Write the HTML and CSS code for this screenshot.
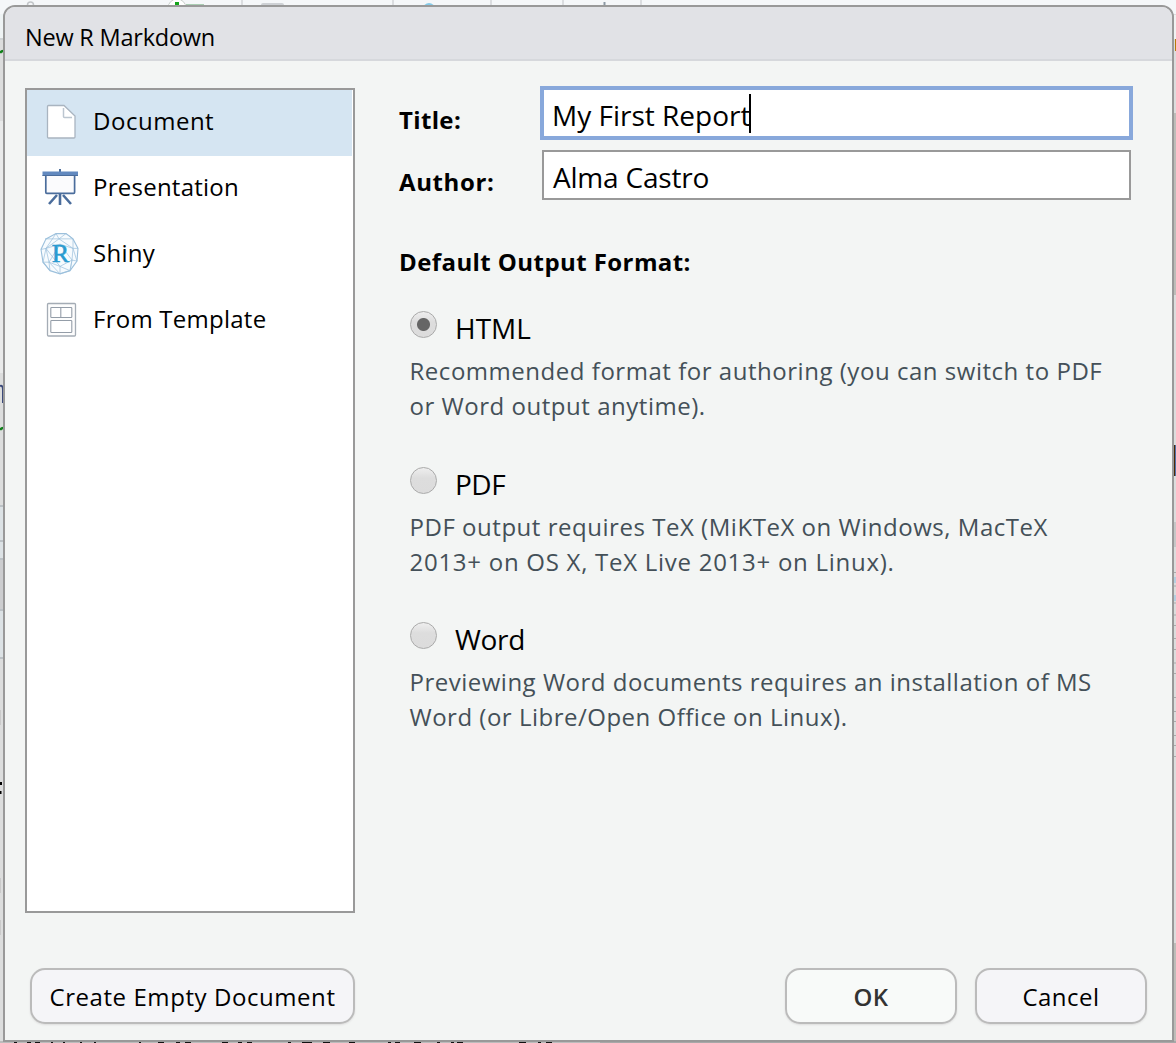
FILE: index.html
```html
<!DOCTYPE html>
<html lang="en">
<head>
<meta charset="utf-8">
<title>New R Markdown</title>
<link rel="stylesheet" href="styles.css">
</head>
<body>
<svg class="workspace" width="1176" height="1043" viewBox="0 0 1176 1043" aria-hidden="true">
  <rect width="1176" height="1043" fill="#dcdddd"/>
  <rect width="1176" height="14" fill="#f5f7f9"/>
  <rect y="14" width="6" height="24" fill="#eef3f4"/>
  <rect y="38" width="6" height="2" fill="#cfd3d5"/>
  <path d="M0 53q1-2 4-2" stroke="#10801a" stroke-width="2.500" fill="none"/>
  <rect y="121" width="4" height="252" fill="#e9eaea"/>
  <circle cx="30.500" cy="5" r="3" fill="none" stroke="#c2c5c8" stroke-width="1.500"/>
  <circle cx="177" cy="8" r="9" fill="#fff" stroke="#c9cfcb"/>
  <rect x="175" y="2" width="4" height="5" fill="#14a51b"/>
  <rect x="186" y="4" width="18" height="3" fill="#aacdb3"/>
  <rect x="261" y="3" width="23" height="4" rx="2" fill="#ced1d5"/>
  <path d="M242 0v6M393 0v6M491 0v6M563 0v6M641 0v6" stroke="#d2d5d8" stroke-width="1.500"/>
  <circle cx="429" cy="9" r="6" fill="#86cbe9"/>
  <path d="M604.500 2v4" stroke="#8c98a3" stroke-width="2"/>
  <path d="M0 386q3-1 3 4v13" stroke="#3c4a7a" stroke-width="2" fill="none"/>
  <path d="M0 430q1-2 4-2" stroke="#10801a" stroke-width="2.500" fill="none"/>
  <rect y="505" width="4" height="153" fill="#dce2e5"/>
  <rect y="559" width="4" height="50" fill="#cccdcf"/>
  <path d="M0 506h4M0 541h4M0 559h4M0 610h4M0 658h4" stroke="#bcc2c6" stroke-width="1.800"/>
  <rect y="710" width="1" height="15" fill="#cacaca"/>
  <rect y="782" width="2" height="3"/><rect y="791" width="1.500" height="3"/>
  <rect y="878" width="1" height="15" fill="#cacaca"/><rect y="920" width="1" height="15" fill="#cacaca"/>
  <rect x="1173" y="15" width="3" height="24" fill="#f1f2f2"/>
  <rect x="1175" y="39" width="1" height="12" fill="#b8790a"/>
  <rect x="1173" y="113" width="3" height="182" fill="#bdbdb9"/>
  <rect x="1174" y="445" width="1" height="31" fill="#4c2a07"/>
  <rect x="1175" y="445" width="1" height="31" fill="#5272a8"/>
  <rect x="1174" y="522" width="2" height="25" fill="#c6c7c7"/>
  <rect x="1174" y="577" width="2" height="6" fill="#b5cfe0"/><rect x="1174" y="595" width="2" height="6" fill="#b5cfe0"/>
  <path d="M1174 572.500h2M1174 586h2M1174 603h2M1174 615h2M1174 625.500h2M1174 638.500h2M1174 649.500h2M1174 663h2M1174 673.500h2M1174 697.500h2M1174 711.500h2M1174 721.500h2M1174 735.500h2M1174 745.500h2M1174 756.500h2" stroke="#aaa"/>
  <rect x="1174" y="943" width="2" height="100" fill="#bdbdb9"/>
  <rect x="0" y="1041" width="600" height="2" fill="#bcbcbc"/>
  <rect x="600" y="1041" width="576" height="2" fill="#a8a8a8"/>
  <path d="M14 1042.500h3M27 1042.500h4M35 1042.500h5M51 1042.500h2M63 1042.500h2M80 1042.500h2M94 1042.500h2M139 1042.500h2M158 1042.500h6M176 1042.500h4M185 1042.500h6M222 1042.500h6M238 1042.500h4M247 1042.500h5M288 1042.500h3M302 1042.500h10M323 1042.500h7M349 1042.500h6M388 1042.500h3M395 1042.500h5M414 1042.500h7M437 1042.500h3M451 1042.500h3M457 1042.500h6M519 1042.500h7M538 1042.500h3M546 1042.500h6" stroke="#111" stroke-width="1.200"/>
</svg>

<main class="dialog">
  <header class="caption"><span class="caption-text">New R Markdown</span></header>
  <div class="content">
    <nav class="kinds">
      <div class="kind selected">
        <svg class="kind-icon" viewBox="0 1 40 40"><path d="M8.500 3.500h15.500l11 10.500v21q0 1-1 1h-25.500q-1 0-1-1v-30.500q0-1 1-1z" fill="#fff" stroke="#a9b4c0" stroke-width="1.300"/><path d="M23.500 6v8.500q0 1 1 1h7.500" fill="none" stroke="#bcc6d0" stroke-width="1.500"/></svg>
        <span class="t-doc">Document</span>
      </div>
      <div class="kind">
        <svg class="kind-icon" viewBox="0 0 40 40"><path d="M20 25v11M17 26l-8 9M23 26l8 9" fill="none" stroke="#4b6d9c" stroke-width="2.600"/><path d="M20 0v4" stroke="#4b6d9c" stroke-width="2"/><rect x="5.800" y="6" width="28.800" height="18.300" rx="1" fill="#fbfbfd" stroke="#4b6d9c" stroke-width="1.700"/><rect x="2.500" y="2.500" width="35.500" height="4.500" fill="#6289bf"/><path d="M2.500 6.500h35.500" stroke="#4b6d9c"/></svg>
        <span class="t-pres">Presentation</span>
      </div>
      <div class="kind">
        <svg class="kind-icon" viewBox="0 0 40 40"><g transform="translate(0 -2.500) scale(1 1.060)" fill="none" stroke="#9cc0dc" stroke-width=".7"><path d="M16 1l10 0 7 5 5 9-1 12-7 9-10 3-10-3-7-8-2-12 5-10z" fill="#f7fbfe" stroke-width="1.100"/><path d="M16 1l3 5-13 9-3 13 7 8-1-8 11 11 10-3-10-4-11-4-3-13 10-14M6 15l14-4 13 4-14-9 14 0-7-5-7 5M33 6l0 9 4 12-5-1-2 10 2-10-12 6 0 7M38 15l-5 0-1 11M6 15l14 17M1 16l5-1M20 11l12 15M20 11l-11 17-6 0M5 6l14 0"/></g><text x="20.500" y="26.700" text-anchor="middle" class="shiny-r">R</text></svg>
        <span class="t-shiny">Shiny</span>
      </div>
      <div class="kind">
        <svg class="kind-icon" viewBox="0 1 40 40"><rect x="7.500" y="3.500" width="28" height="32.500" rx="1" fill="#fdfdfd" stroke="#a4acb5" stroke-width="1.300"/><g fill="#fff" stroke="#949da8" stroke-width="1.100"><rect x="10.800" y="7.500" width="21" height="10" rx=".8"/><path d="M20.800 7.500v10"/><rect x="10.800" y="20.500" width="21" height="12" rx=".8"/></g></svg>
        <span class="t-temp">From Template</span>
      </div>
    </nav>
    <section class="options">
      <div class="field">
        <label class="label t-title">Title:</label>
        <div class="input focused"><span class="value t-report">My First Report</span><i class="caret"></i></div>
      </div>
      <div class="field">
        <label class="label t-author">Author:</label>
        <div class="input"><span class="value t-alma">Alma Castro</span></div>
      </div>
      <h2 class="label heading">Default Output Format:</h2>
      <div class="format">
        <div class="choice"><i class="radio checked"></i><span class="t-html">HTML</span></div>
        <p class="note"><span class="t-n1">Recommended format for authoring (you can switch to PDF</span><br><span class="t-n2">or Word output anytime).</span></p>
      </div>
      <div class="format">
        <div class="choice"><i class="radio"></i><span class="t-pdf">PDF</span></div>
        <p class="note"><span class="t-n3">PDF output requires TeX (MiKTeX on Windows, MacTeX</span><br><span class="t-n4">2013+ on OS X, TeX Live 2013+ on Linux).</span></p>
      </div>
      <div class="format">
        <div class="choice"><i class="radio"></i><span class="t-word">Word</span></div>
        <p class="note"><span class="t-n5">Previewing Word documents requires an installation of MS</span><br><span class="t-n6">Word (or Libre/Open Office on Linux).</span></p>
      </div>
    </section>
  </div>
  <footer class="buttons">
    <button class="button create"><span class="t-create">Create Empty Document</span></button>
    <button class="button ok"><span class="t-ok">OK</span></button>
    <button class="button"><span class="t-cancel">Cancel</span></button>
  </footer>
</main>
</body>
</html>
```
FILE: styles.css
```css
* { box-sizing: border-box; }
body {
  margin: 0;
  height: 1043px;
  overflow: hidden;
  padding: 5px 2px 1px 3px;
  font-family: "Open Sans", "Noto Sans", sans-serif;
  font-size: 24px;
  color: #000;
}
.workspace { position: absolute; left: 0; top: 0; z-index: -1; }
.dialog {
  display: flex;
  flex-direction: column;
  width: 1171px;
  height: 1037px;
  background: #f3f5f4;
  border: 2px solid #999;
  border-radius: 12px 12px 0 0;
  overflow: hidden;
}
.caption {
  flex: none;
  height: 54px;
  padding: 10px 0 0 20px;
  line-height: 40px;
  font-size: 23.5px;
  letter-spacing: -.22px;
  background: #e1e2e6;
  border-bottom: 2px solid #d6d8dc;
}
.content { display: flex; padding: 25px 39px 0 20px; height: 907px; }
.kinds {
  width: 330px;
  height: 825px;
  margin-top: 2px;
  background: #fff;
  border: 2px solid #999;
  padding-right: 1px;
}
.kind {
  display: flex;
  align-items: center;
  height: 66px;
  padding-left: 13px;
  gap: 13px;
  line-height: 62px;
}
.kind span { padding-bottom: 4px; }
.selected { background: #d5e5f2; }
.kind-icon { width: 40px; height: 40px; flex: none; overflow: visible; }
.shiny-r { font: 400 26px "Liberation Serif", serif; fill: #2a9bd0; stroke: #2a9bd0; stroke-width: .6px; }
.options { flex: 1; margin-left: 44px; }
.field { display: flex; height: 54px; margin-bottom: 8px; }
.label { font-weight: 700; font-size: 24px; margin: 0; }
.field .label { width: 143px; line-height: 68px; }
.input {
  display: flex;
  align-items: center;
  width: 589px;
  height: 50px;
  margin-top: 2px;
  padding-left: 9px;
  border: 2px solid #999;
  background: #fff;
  font-size: 28px;
}
.focused {
  width: 593px;
  height: 54px;
  margin: 0 -2px;
  padding-left: 8px;
  border: 4px solid #88a8db;
}
.value { line-height: 42px; padding-top: 4px; }
.caret { width: 2px; height: 39px; background: #000; margin-left: -1px; }
.heading { line-height: 34px; margin-top: 43px; height: 34px; letter-spacing: .42px; }
.format { padding-left: 11px; height: 155.500px; }
.heading + .format { margin-top: 29px; }
.choice { display: flex; height: 45px; font-size: 28px; line-height: 40px; gap: 18px; }
.radio {
  width: 27px;
  height: 27px;
  margin-top: 3px;
  border: 1px solid #aaa;
  border-radius: 50%;
  background: linear-gradient(#eee, #ddd 40%, #dcdcdc);
}
.checked { background: radial-gradient(circle, #666 0 6px, transparent 7px), linear-gradient(#eee, #ddd 40%, #dcdcdc); }
.note { margin: 0 0 0 -.5px; color: #445058; line-height: 35px; white-space: nowrap; }
.buttons { display: flex; padding: 0 25px; height: 56px; }
.button {
  width: 172px;
  height: 56px;
  margin-left: 18px;
  padding: 2px 0 0;
  border: 2px solid #bbb;
  border-radius: 15px;
  background: #f5f5f8;
  box-shadow: 0 1px 2px #ddd;
  color: #000;
  font: 24px/50px "Open Sans", sans-serif;
  white-space: nowrap;
}
.create { width: 325px; margin: 0 auto 0 0; }
.ok { background: #f8faf9; color: #333; font-weight: 600; }

/* Tracking per label */
.t-doc { letter-spacing: .52px; }
.t-pres, .t-shiny, .t-temp { letter-spacing: .25px; }
.t-title { letter-spacing: .35px; }
.t-author { letter-spacing: .6px; }
.t-alma { letter-spacing: -.2px; }
.t-pdf { letter-spacing: -.5px; }
.t-word { letter-spacing: -.3px; }
.t-n1, .t-n2, .t-n3 { letter-spacing: .53px; }
.t-n4 { letter-spacing: .73px; }
.t-n5, .t-n6 { letter-spacing: .5px; }
.t-create { letter-spacing: .57px; }
.t-ok { letter-spacing: .5px; }
.t-cancel { letter-spacing: .5px; }
```
